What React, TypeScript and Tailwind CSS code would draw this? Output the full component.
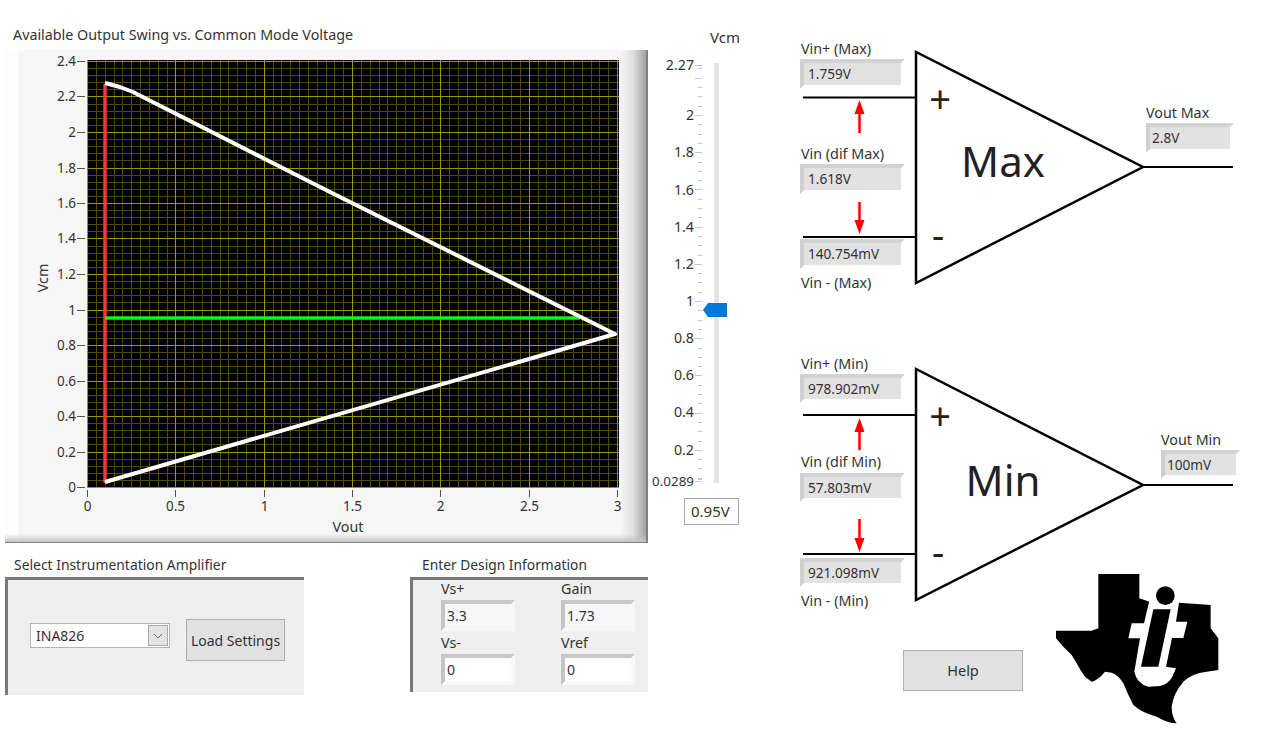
const FONT = "font-['Noto_Sans',sans-serif]";

function range(n: number) {
  return Array.from({ length: n }, (_, i) => i);
}

function Plot() {
  const L = 87, R = 619, T = 60, B = 487;
  const xAt = (v: number) => Math.round(87 + v * 176.7) + 0.5;
  const yAt = (v: number) => Math.round(487 - v * 177.5) + 0.5;
  return (
    <svg viewBox="5 50 643 493" width={643} height={493} className="block" fontFamily="'Noto Sans',sans-serif" fontSize={13.5} fill="#333">
      <rect x={L} y={T} width={R - L} height={B - T} fill="#000" />
      {range(61).map((i) => {
        const x = xAt(i * 0.05);
        return x > R ? null : <line key={i} x1={x} x2={x} y1={T} y2={B} stroke="#4e4b00" strokeWidth={1} />;
      })}
      {range(61).map((i) => {
        const y = yAt(i * 0.04);
        return y < T ? null : <line key={i} x1={L} x2={R} y1={y} y2={y} stroke="#4e4b00" strokeWidth={1} />;
      })}
      {range(7).map((i) => (
        <line key={i} x1={xAt(i * 0.5)} x2={xAt(i * 0.5)} y1={T} y2={B} stroke="#9c9600" strokeWidth={1} />
      ))}
      {range(13).map((i) => (
        <line key={i} x1={L} x2={R} y1={yAt(i * 0.2)} y2={yAt(i * 0.2)} stroke="#9c9600" strokeWidth={1} />
      ))}
      <line x1={105} x2={105} y1={84} y2={483} stroke="#ff3434" strokeWidth={3.5} />
      <line x1={105} x2={580} y1={318} y2={318} stroke="#18f018" strokeWidth={3.5} />
      <polyline points="105,83 120,87 133,92 330,192 615,334 105,482" fill="none" stroke="#fff" strokeWidth={4} strokeLinejoin="round" />
      {["0", "0.2", "0.4", "0.6", "0.8", "1", "1.2", "1.4", "1.6", "1.8", "2", "2.2", "2.4"].map((t, i) => (
        <g key={t}>
          <line x1={77} x2={85} y1={yAt(i * 0.2)} y2={yAt(i * 0.2)} stroke="#555" />
          <text x={76} y={yAt(i * 0.2) + 4} textAnchor="end">{t}</text>
        </g>
      ))}
      {["0", "0.5", "1", "1.5", "2", "2.5", "3"].map((t, i) => (
        <g key={t}>
          <line x1={xAt(i * 0.5)} x2={xAt(i * 0.5)} y1={490} y2={497} stroke="#555" />
          <text x={xAt(i * 0.5)} y={511} textAnchor="middle">{t}</text>
        </g>
      ))}
      <text x={348} y={532} textAnchor="middle" fontSize={14.3}>Vout</text>
      <text x={48} y={278} textAnchor="middle" fontSize={14.3} transform="rotate(-90 48 278)">Vcm</text>
    </svg>
  );
}

function Slider() {
  const labels: [string, number][] = [
    ["2.27", 65], ["2", 115], ["1.8", 152], ["1.6", 190], ["1.4", 227], ["1.2", 264], ["1", 301],
    ["0.8", 338], ["0.6", 375], ["0.4", 412], ["0.2", 450], ["0.0289", 481],
  ];
  const ticks = range(44).map((i) => Math.round(77.8 + i * 9.3) + 0.5);
  return (
    <svg viewBox="650 50 110 440" width={110} height={440} className="block" fontFamily="'Noto Sans',sans-serif" fontSize={13.5} fill="#333">
      <rect x={714} y={63} width={5} height={420} fill="#e4e4e4" />
      {ticks.map((y, i) => (
        <line key={i} x1={i % 4 === 0 ? 695 : 698} x2={702} y1={y} y2={y} stroke="#c4c4c4" />
      ))}
      <line x1={695} x2={702} y1={65.5} y2={65.5} stroke="#c4c4c4" />
      <line x1={698} x2={702} y1={68.5} y2={68.5} stroke="#c4c4c4" />
      <line x1={695} x2={702} y1={481.5} y2={481.5} stroke="#c4c4c4" />
      <line x1={698} x2={702} y1={479.5} y2={479.5} stroke="#c4c4c4" />
      {labels.map(([t, y]) => (
        <text key={t} x={694} y={y + 5} textAnchor="end" fontSize={t === "0.0289" ? 13.4 : 14.2}>{t}</text>
      ))}
      <polygon points="703,310 708,303 727,303 727,317 708,317" fill="#0078d7" />
    </svg>
  );
}

function Readout({ children, className }: { children: React.ReactNode; className: string }) {
  return (
    <div className={`absolute flex items-center border-4 border-t-[#d2d2d2] border-l-[#cfcfcf] border-r-white border-b-white bg-[#e2e2e2] text-[13.6px] leading-none text-[#333] ${className}`}>
      {children}
    </div>
  );
}

function Label({ children, className }: { children: React.ReactNode; className: string }) {
  return <div className={`absolute text-[14.3px] leading-[18px] text-[#333] whitespace-nowrap ${className}`}>{children}</div>;
}

function AmpMax() {
  return (
    <div className="relative w-[461px] h-[260px]">
      <svg viewBox="800 40 461 260" width={461} height={260} className="block" fontFamily="'Noto Sans',sans-serif" fill="#222">
        <polygon points="916,52 916,283 1143,167" fill="none" stroke="#000" strokeWidth={2.5} strokeLinejoin="miter" />
        <line x1={803} x2={916} y1={97.5} y2={97.5} stroke="#000" strokeWidth={2} />
        <line x1={803} x2={916} y1={237} y2={237} stroke="#000" strokeWidth={2} />
        <line x1={1143} x2={1233} y1={167} y2={167} stroke="#000" strokeWidth={2} />
        <line x1={859.5} x2={859.5} y1={112} y2={133} stroke="#f00" strokeWidth={2.5} />
        <polygon points="859.5,100 854.5,114 864.5,114" fill="#f00" />
        <line x1={859.5} x2={859.5} y1={202} y2={222} stroke="#f00" strokeWidth={2.5} />
        <polygon points="859.5,234 854.5,220 864.5,220" fill="#f00" />
        <text x={940} y={112.5} fontSize={38} textAnchor="middle">+</text>
        <text x={938} y={249} fontSize={38} textAnchor="middle">-</text>
        <text x={1003} y={177} fontSize={42} textAnchor="middle">Max</text>
      </svg>
      <Label className="left-[1px] top-0">Vin+ (Max)</Label>
      <Readout className="left-0 top-[19px] w-[105px] h-[30px] pl-[4px]">1.759V</Readout>
      <Label className="left-[1px] top-[105px]">Vin (dif Max)</Label>
      <Readout className="left-0 top-[124px] w-[105px] h-[30px] pl-[4px]">1.618V</Readout>
      <Readout className="left-0 top-[199px] w-[105px] h-[30px] pl-[4px]">140.754mV</Readout>
      <Label className="left-[1px] top-[234px]">Vin - (Max)</Label>
      <Label className="left-[346px] top-[64px]">Vout Max</Label>
      <Readout className="left-[346px] top-[83px] w-[88px] h-[30px] pl-[2px]">2.8V</Readout>
    </div>
  );
}

function AmpMin() {
  return (
    <div className="relative w-[461px] h-[260px]">
      <svg viewBox="800 355 461 260" width={461} height={260} className="block" fontFamily="'Noto Sans',sans-serif" fill="#222">
        <polygon points="916,369 916,600 1143,485" fill="none" stroke="#000" strokeWidth={2.5} strokeLinejoin="miter" />
        <line x1={803} x2={916} y1={415} y2={415} stroke="#000" strokeWidth={2} />
        <line x1={803} x2={916} y1={554} y2={554} stroke="#000" strokeWidth={2} />
        <line x1={1143} x2={1233} y1={485} y2={485} stroke="#000" strokeWidth={2} />
        <line x1={859.5} x2={859.5} y1={430} y2={450} stroke="#f00" strokeWidth={2.5} />
        <polygon points="859.5,418 854.5,432 864.5,432" fill="#f00" />
        <line x1={859.5} x2={859.5} y1={519} y2={540} stroke="#f00" strokeWidth={2.5} />
        <polygon points="859.5,552 854.5,538 864.5,538" fill="#f00" />
        <text x={940} y={429.5} fontSize={38} textAnchor="middle">+</text>
        <text x={938} y={566} fontSize={38} textAnchor="middle">-</text>
        <text x={1003} y={496} fontSize={42} textAnchor="middle">Min</text>
      </svg>
      <Label className="left-[1px] top-0">Vin+ (Min)</Label>
      <Readout className="left-0 top-[19px] w-[105px] h-[29px] pl-[4px]">978.902mV</Readout>
      <Label className="left-[1px] top-[98px]">Vin (dif Min)</Label>
      <Readout className="left-0 top-[118px] w-[105px] h-[29px] pl-[4px]">57.803mV</Readout>
      <Readout className="left-0 top-[203px] w-[105px] h-[29px] pl-[4px]">921.098mV</Readout>
      <Label className="left-[1px] top-[237px]">Vin - (Min)</Label>
      <Label className="left-[361px] top-[76px]">Vout Min</Label>
      <Readout className="left-[361px] top-[95px] w-[79px] h-[29px] pl-[2px]">100mV</Readout>
    </div>
  );
}

function TiLogo() {
  return (
    <svg viewBox="0 0 600 525" width={200} height={175} className="block">
      <path
        fill="#000"
        d="M175 42 L298 42 L298 115 L328 125 L415 128 L470 132 L512 135 L512 205 L535 235 L535 330 L500 335 Q455 340 430 365 Q400 400 395 440 Q395 470 410 490 Q385 490 350 470 Q305 458 280 435 Q262 400 250 370 Q235 345 215 338 L195 335 Q175 360 155 365 L135 350 Q120 330 110 310 L95 285 L70 260 L48 235 L48 212 L155 212 L175 205 Z"
      />
      <path
        fill="#fff"
        d="M328 122 L418 122 L408 185 L442 185 L430 234 L396 234 L378 320 L408 325 L397 350 Q385 372 360 378 L325 380 Q290 370 283 335 L300 235 L265 235 L275 190 L312 190 Z"
      />
      <polygon fill="#000" points="340,148 392,148 355,320 303,320" />
      <circle cx={376} cy={107} r={28} fill="#000" />
    </svg>
  );
}

function DesignField({ value, tone }: { value: string; tone: string }) {
  return (
    <div className={`w-[74px] h-[31px] flex items-center pl-[2px] border-4 border-t-[#c8c8c8] border-l-[#c4c4c4] border-r-[#f7f7f7] border-b-[#f7f7f7] text-[14px] leading-none text-[#333] ${tone}`}>
      {value}
    </div>
  );
}

export default function App() {
  return (
    <div className={`w-[1261px] h-[743px] bg-white flex overflow-hidden ${FONT} text-[14.3px] text-[#333]`}>
      <div className="w-[650px] shrink-0 pl-[5px] pt-[26px]">
        <div className="pl-[8px] h-[24px] leading-[18px] whitespace-nowrap">Available Output Swing vs. Common Mode Voltage</div>
        <div className="w-[643px] h-[493px] border-r-2 border-b border-[#808080] bg-[linear-gradient(to_bottom,transparent_484px,#c4c4c4_492px),linear-gradient(to_right,#fdfdfd_13px,#f6f6f6_13px,#f6f6f6_615px,#e0e0e0_628px,#a0a0a0_641px)]">
          <Plot />
        </div>
        <div className="flex mt-[13px]">
          <div className="w-[299px]">
            <div className="pl-[9px] h-[21px] leading-[18px] whitespace-nowrap text-[13.9px]">Select Instrumentation Amplifier</div>
            <div className="h-[118px] bg-[#efefef] border-t-[3px] border-l-[3px] border-[#777] flex items-start pl-[22px] pt-[39px] gap-[16px]">
              <div className="w-[140px] h-[25px] mt-[4px] bg-white border border-[#b4b4b4] flex items-center justify-between pl-[5px] pr-[1px] text-[14px]">
                <span>INA826</span>
                <span className="w-[20px] h-[21px] bg-[#e4e4e4] border border-[#a8a8a8] flex items-center justify-center">
                  <svg width={10} height={6} viewBox="0 0 10 6"><path d="M1 1 L5 5 L9 1" fill="none" stroke="#666" strokeWidth={1} /></svg>
                </span>
              </div>
              <div className="w-[99px] h-[42px] bg-[#e1e1e1] border border-[#adadad] flex items-center justify-center whitespace-nowrap text-[14px]">Load Settings</div>
            </div>
          </div>
          <div className="ml-[106px] w-[238px]">
            <div className="pl-[12px] h-[21px] leading-[18px] whitespace-nowrap text-[13.8px]">Enter Design Information</div>
            <div className="h-[115px] bg-[#efefef] border-t-[3px] border-l-[3px] border-[#777] pl-[28px] grid grid-cols-[120px_74px] content-start">
              <div className="h-[20px] leading-[18px]">Vs+</div>
              <div className="h-[20px] leading-[18px]">Gain</div>
              <DesignField value="3.3" tone="bg-[#f6f6f6]" />
              <DesignField value="1.73" tone="bg-[#f6f6f6]" />
              <div className="h-[23px] pt-[3px] leading-[18px]">Vs-</div>
              <div className="h-[23px] pt-[3px] leading-[18px]">Vref</div>
              <DesignField value="0" tone="bg-white" />
              <DesignField value="0" tone="bg-white" />
            </div>
          </div>
        </div>
      </div>

      <div className="w-[150px] shrink-0 pt-[28px]">
        <div className="h-[22px] pl-[60px] leading-[18px] text-[15px]">Vcm</div>
        <Slider />
        <div className="ml-[34px] mt-[8px] w-[55px] h-[27px] border border-[#a8a8a8] flex items-center pl-[6px] text-[15px]">0.95V</div>
      </div>

      <div className="w-[461px] shrink-0 pt-[40px]">
        <AmpMax />
        <div className="mt-[55px]">
          <AmpMin />
        </div>
        <div className="flex items-start -mt-[55px]">
          <div className="ml-[103px] mt-[90px] w-[120px] h-[41px] bg-[#e1e1e1] border border-[#adadad] flex items-center justify-center text-[14.5px]">Help</div>
          <div className="ml-[17px]">
            <TiLogo />
          </div>
        </div>
      </div>
    </div>
  );
}
